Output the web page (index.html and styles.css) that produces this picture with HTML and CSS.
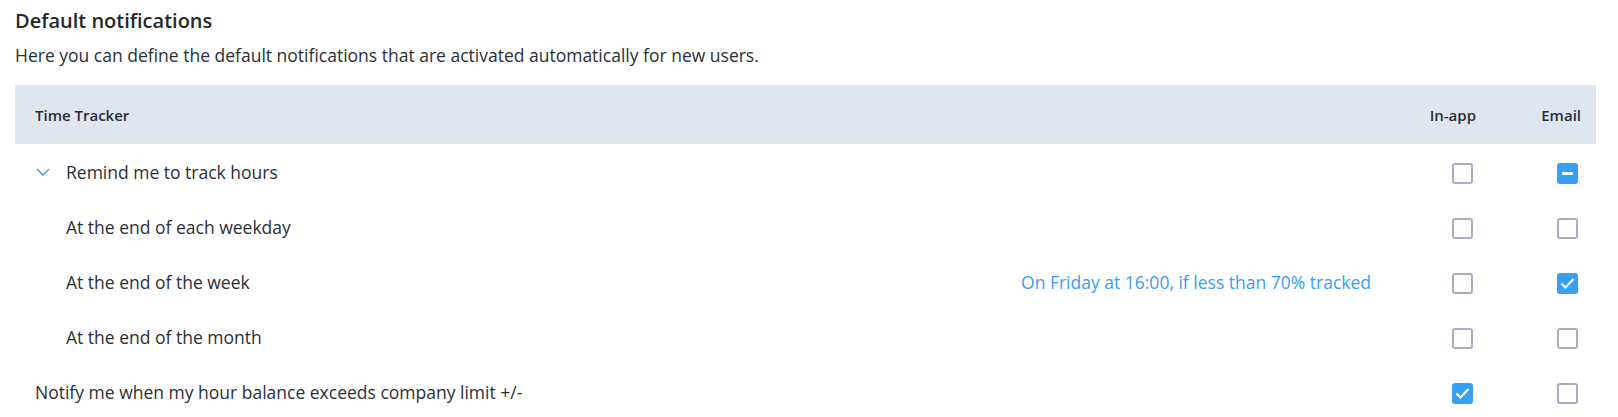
FILE: index.html
```html
<!DOCTYPE html>
<html>
<head lang="en">
    <meta charset="UTF-8">
    <title>Default notifications</title>
    <link rel="stylesheet" href="styles.css">
</head>
<body>
<div id="page">
    <h2 class="title">Default notifications</h2>
    <p class="intro">Here you can define the default notifications that are activated automatically for new users.</p>

    <div class="table">
        <div class="row head">
            <div class="label">Time Tracker</div>
            <div class="cell">In-app</div>
            <div class="cell">Email</div>
        </div>

        <div class="row">
            <div class="label">
                <svg class="chevron" width="14" height="8" viewBox="0 0 14 8"><path d="M1 1 L7 7 L13 1" fill="none" stroke="#3d9be9" stroke-width="1.3"/></svg>
                Remind me to track hours
            </div>
            <div class="cell"><span class="box"></span></div>
            <div class="cell"><span class="box on"><i class="dash"></i></span></div>
        </div>

        <div class="row">
            <div class="label sub">At the end of each weekday</div>
            <div class="cell"><span class="box"></span></div>
            <div class="cell"><span class="box"></span></div>
        </div>

        <div class="row">
            <div class="label sub">At the end of the week</div>
            <div class="note">On Friday at 16:00, if less than 70% tracked</div>
            <div class="cell"><span class="box"></span></div>
            <div class="cell"><span class="box on"><svg width="15" height="13" viewBox="0 0 15 13"><path d="M1.5 6.5 L5.5 10.5 L13.5 2" fill="none" stroke="#fff" stroke-width="2.2"/></svg></span></div>
        </div>

        <div class="row">
            <div class="label sub">At the end of the month</div>
            <div class="cell"><span class="box"></span></div>
            <div class="cell"><span class="box"></span></div>
        </div>

        <div class="row">
            <div class="label">Notify me when my hour balance exceeds company limit +/-</div>
            <div class="cell"><span class="box on"><svg width="15" height="13" viewBox="0 0 15 13"><path d="M1.5 6.5 L5.5 10.5 L13.5 2" fill="none" stroke="#fff" stroke-width="2.2"/></svg></span></div>
            <div class="cell"><span class="box"></span></div>
        </div>
    </div>
</div>
</body>
</html>
```

FILE: styles.css
```css
*{
    margin: 0;
    padding: 0;
    box-sizing: border-box;
}
body{
    font-family: "Open Sans", "Liberation Sans", sans-serif;
    color: #2c2f38;
    background: #fff;
}
#page{
    padding: 9px 22px 0 15px;
}
.title{
    font-size: 20px;
    line-height: 24px;
    font-weight: 600;
    color: #26282e;
}
.intro{
    font-size: 17.5px;
    line-height: 24px;
    margin-top: 10px;
}
.table{
    margin-top: 18px;
}
.row{
    display: flex;
    align-items: center;
    height: 55px;
    padding: 0 15px 0 20px;
    font-size: 17.5px;
}
.row.head{
    height: 59px;
    background: #dfe6ef;
    font-size: 15px;
    font-weight: 600;
    color: #2a2d36;
}
.label{
    flex: 1;
    display: flex;
    align-items: center;
}
.label.sub{
    padding-left: 31px;
}
.chevron{
    margin: 1px 16px 0 1px;
}
.note{
    color: #3b9cf0;
    padding-right: 15px;
}
.cell{
    width: 105px;
    text-align: right;
}
.row .cell:nth-last-child(2){
    width: 90px;
}
.box{
    display: inline-flex;
    align-items: center;
    justify-content: center;
    width: 21px;
    height: 21px;
    border: 2px solid #a8aec0;
    border-radius: 3px;
    margin-right: 3px;
    vertical-align: middle;
}
.box.on{
    background: #35a0f6;
    border-color: #35a0f6;
}
.dash{
    width: 11px;
    height: 3px;
    background: #fff;
    border-radius: 1px;
}
```
